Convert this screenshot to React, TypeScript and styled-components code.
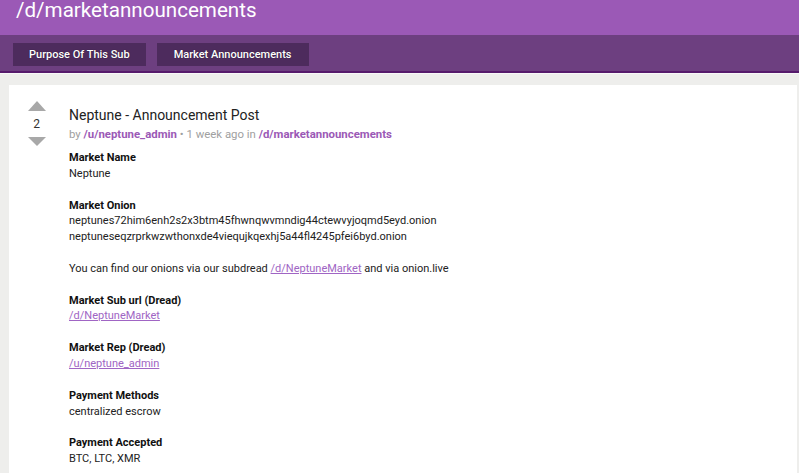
import styled, { createGlobalStyle } from "styled-components";

const GlobalStyle = createGlobalStyle`
    html, body {
        margin: 0;
        padding: 0;
        background-color: #eeeeec;
        font-family: Roboto, "Liberation Sans", Arial, sans-serif;
    }
`;

const Page = styled.div`
    display: flex;
    flex-direction: column;
    height: 473px;
    overflow: hidden;
`;

const Header = styled.header`
    height: 35px;
    flex-shrink: 0;
    background-color: #9b59b6;
    padding: 0 16px;
    box-sizing: border-box;
`;

const SubTitle = styled.h1`
    margin: 0;
    font-size: 20.6px;
    line-height: 20px;
    font-weight: 400;
    color: #ffffff;
`;

const NavBar = styled.nav`
    display: flex;
    flex-shrink: 0;
    gap: 11px;
    align-items: flex-start;
    height: 38px;
    padding: 8px 13px 0;
    box-sizing: border-box;
    background-color: #6d3f80;
    border-bottom: 2px solid #561a6c;
    box-shadow: 0 1px 0 #f8f8f8;
`;

const NavButton = styled.a<{ $pad: number }>`
    display: flex;
    align-items: center;
    justify-content: center;
    height: 23px;
    padding: 0 ${(p) => p.$pad}px;
    background-color: #4d2b5d;
    color: #ffffff;
    font-size: 11px;
    font-weight: 500;
    text-shadow: 0 0 1px rgba(0, 0, 0, 0.6);
    text-decoration: none;
`;

const Content = styled.main`
    padding: 12px 2px 0 9px;
`;

const PostCard = styled.article`
    display: flex;
    background-color: #ffffff;
    padding: 20px 16px 12px 18px;
    min-height: 380px;
`;

const VoteColumn = styled.div`
    display: flex;
    flex-direction: column;
    align-items: center;
    width: 19px;
    margin: -4px 23px 0 0;
`;

const Arrow = styled.svg`
    display: block;
    width: 18px;
    height: 10px;
`;

const Score = styled.span`
    font-size: 12px;
    line-height: 16px;
    color: #333333;
    margin: 5px 0 5px;
`;

const PostBody = styled.div`
    display: flex;
    flex-direction: column;
`;

const PostTitle = styled.h2`
    margin: 0;
    font-size: 14px;
    line-height: 20px;
    font-weight: 400;
    color: #222222;
`;

const Meta = styled.div`
    margin-top: 1px;
    font-size: 11.4px;
    line-height: 16px;
    color: #a0a0a0;
`;

const MetaLink = styled.a`
    color: #9b59b6;
    font-weight: 700;
    text-decoration: none;
`;

const Text = styled.div`
    margin-top: 8px;
    font-size: 11px;
    line-height: 15.85px;
    color: #222222;
`;

const Block = styled.p`
    margin: 0 0 15.85px;
`;

const Label = styled.strong`
    display: block;
    font-weight: 700;
    color: #111111;
`;

const BodyLink = styled.a`
    color: #a065c4;
    text-decoration: underline;
`;

const Line = styled.span`
    display: block;
`;

export default function App() {
    return (
        <Page>
            <GlobalStyle />
            <Header>
                <SubTitle>/d/marketannouncements</SubTitle>
            </Header>
            <NavBar>
                <NavButton $pad={16}>Purpose Of This Sub</NavButton>
                <NavButton $pad={17}>Market Announcements</NavButton>
            </NavBar>
            <Content>
                <PostCard>
                    <VoteColumn>
                        <Arrow viewBox="0 0 18 10">
                            <polygon points="9,0 18,10 0,10" fill="#a8a8a8" />
                        </Arrow>
                        <Score>2</Score>
                        <Arrow viewBox="0 0 18 10">
                            <polygon points="0,0 18,0 9,9" fill="#a8a8a8" />
                        </Arrow>
                    </VoteColumn>
                    <PostBody>
                        <PostTitle>Neptune - Announcement Post</PostTitle>
                        <Meta>
                            by <MetaLink>/u/neptune_admin</MetaLink> • 1 week ago in{" "}
                            <MetaLink>/d/marketannouncements</MetaLink>
                        </Meta>
                        <Text>
                            <Block>
                                <Label>Market Name</Label>
                                Neptune
                            </Block>
                            <Block>
                                <Label>Market Onion</Label>
                                <Line>neptunes72him6enh2s2x3btm45fhwnqwvmndig44ctewvyjoqmd5eyd.onion</Line>
                                <Line>neptuneseqzrprkwzwthonxde4viequjkqexhj5a44fl4245pfei6byd.onion</Line>
                            </Block>
                            <Block>
                                You can find our onions via our subdread{" "}
                                <BodyLink>/d/NeptuneMarket</BodyLink> and via onion.live
                            </Block>
                            <Block>
                                <Label>Market Sub url (Dread)</Label>
                                <BodyLink>/d/NeptuneMarket</BodyLink>
                            </Block>
                            <Block>
                                <Label>Market Rep (Dread)</Label>
                                <BodyLink>/u/neptune_admin</BodyLink>
                            </Block>
                            <Block>
                                <Label>Payment Methods</Label>
                                centralized escrow
                            </Block>
                            <Block>
                                <Label>Payment Accepted</Label>
                                BTC, LTC, XMR
                            </Block>
                        </Text>
                    </PostBody>
                </PostCard>
            </Content>
        </Page>
    );
}
